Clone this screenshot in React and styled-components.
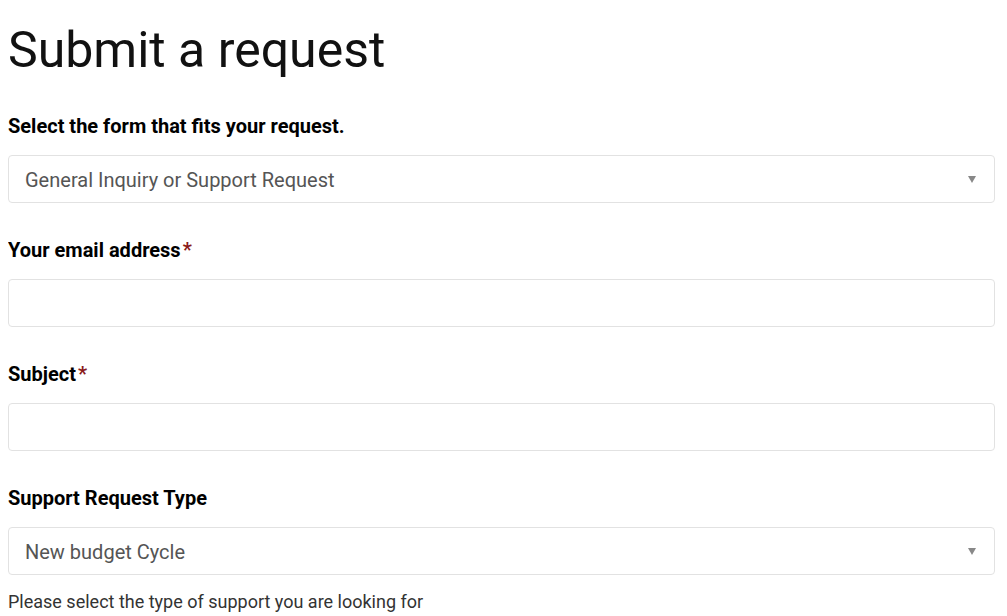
import React from 'react'
import styled, { createGlobalStyle } from 'styled-components'

const GlobalStyle = createGlobalStyle`
  body {
    margin: 8px;
    background: #fff;
    font-family: Roboto, "Liberation Sans", Arial, sans-serif;
    color: #000;
  }
`

const fields = [
  { label: 'Select the form that fits your request.', kind: 'select', value: 'General Inquiry or Support Request' },
  { label: 'Your email address', kind: 'input', required: true },
  { label: 'Subject', kind: 'input', required: true },
  {
    label: 'Support Request Type',
    kind: 'select',
    value: 'New budget Cycle',
    hint: 'Please select the type of support you are looking for'
  }
]

const App = () => (
  <Page>
    <GlobalStyle />
    <Title>Submit a request</Title>
    <Form>
      {fields.map((field, index) => (
        <Field key={index}>
          <Label>
            {field.label}
            {field.required && <Required>*</Required>}
          </Label>
          {field.kind === 'select' ? (
            <SelectBox>
              <SelectValue>{field.value}</SelectValue>
              <Caret />
            </SelectBox>
          ) : (
            <TextInput type='text' />
          )}
          {field.hint && <Hint>{field.hint}</Hint>}
        </Field>
      ))}
    </Form>
  </Page>
)

export default App

const Page = styled.div`
  width: 987px;
`

const Title = styled.h1`
  margin: 0;
  padding-top: 12px;
  font-size: 50px;
  font-weight: 400;
  line-height: 60px;
  color: #111;
`

const Form = styled.div`
  display: flex;
  flex-direction: column;
  gap: 35px;
  margin-top: 34px;
`

const Field = styled.div`
  display: flex;
  flex-direction: column;
`

const Label = styled.label`
  font-size: 20px;
  font-weight: 700;
  line-height: 24px;
  margin-bottom: 17px;
  color: #000;
`

const Required = styled.span`
  color: #8a1a1a;
  margin-left: 2px;
`

const boxStyles = `
  box-sizing: border-box;
  width: 100%;
  height: 48px;
  border: 1px solid #e2e2e2;
  border-radius: 4px;
  background: #fff;
`

const SelectBox = styled.div`
  ${boxStyles}
  display: flex;
  align-items: center;
  justify-content: space-between;
  padding: 1px 18px 0 16px;
`

const SelectValue = styled.span`
  font-size: 20px;
  color: #555;
`

const Caret = styled.span`
  width: 0;
  height: 0;
  border-left: 4px solid transparent;
  border-right: 4px solid transparent;
  border-top: 7px solid #888;
`

const TextInput = styled.input`
  ${boxStyles}
  padding: 0 16px;
  font-family: inherit;
  font-size: 20px;
  outline: none;
`

const Hint = styled.p`
  margin: 16px 0 0;
  font-size: 18px;
  line-height: 22px;
  color: #333;
`
